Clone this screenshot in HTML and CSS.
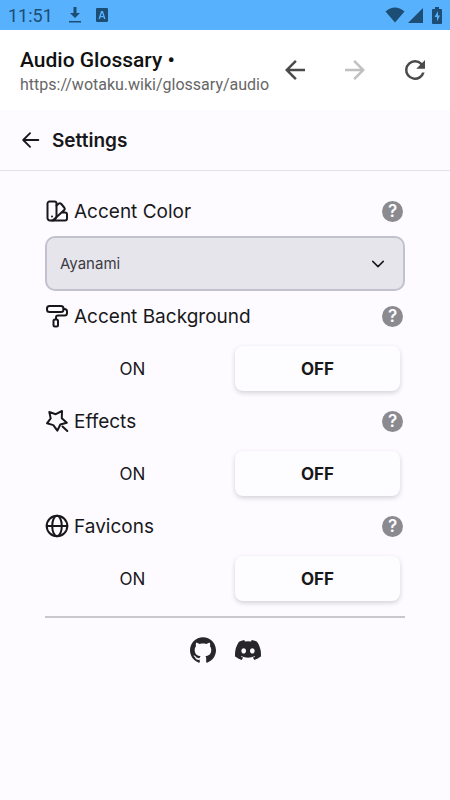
FILE: index.html
```html
<!DOCTYPE html>
<html lang="en">
<head>
<meta charset="utf-8">
<meta name="viewport" content="width=device-width, initial-scale=1">
<title>Settings</title>
<link rel="stylesheet" href="styles.css">
</head>
<body>
<div class="status">
  <span class="clock">11:51</span>
  <svg class="status-download" width="14" height="18" viewBox="0 0 14 18"><path d="M5.500 1h3v6H12l-5 5-5-5h3.500zM1 15h12v1.500H1z"/></svg>
  <svg class="status-app" width="12" height="14" viewBox="0 0 12 14"><path fill-rule="evenodd" d="M1 0h10a1 1 0 0 1 1 1v12a1 1 0 0 1-1 1H1a1 1 0 0 1-1-1V1a1 1 0 0 1 1-1zm4 3L2.500 11H4l.5-1.800h3L8 11h1.500L7 3zm1 1.700L7.100 8H4.900z"/></svg>
  <svg class="status-wifi" width="20" height="16" viewBox="0 0 20 16"><path d="M.5 4.500Q10-3.500 19.500 4.500L10 15.500z"/></svg>
  <svg class="status-signal" width="15" height="15" viewBox="0 0 15 15"><path d="M15 0v15H0z"/></svg>
  <svg class="status-battery" width="10" height="17" viewBox="0 0 10 17"><path fill-rule="evenodd" d="M3 0h4v2h2a1 1 0 0 1 1 1v13a1 1 0 0 1-1 1H1a1 1 0 0 1-1-1V3a1 1 0 0 1 1-1h2zm3 4L2.500 10H5v4.500L8 8.500H6z"/></svg>
</div>

<header class="browser">
  <div class="page-info">
    <div class="page-title">Audio Glossary •</div>
    <div class="page-url">https://wotaku.wiki/glossary/audio</div>
  </div>
  <nav class="browser-nav" aria-label="Browser">
    <button type="button" aria-label="Back"><svg width="30" height="30" viewBox="0 0 24 24"><path d="M20 11H7.830l5.590-5.590L12 4l-8 8 8 8 1.410-1.410L7.830 13H20z"/></svg></button>
    <button type="button" aria-label="Forward" disabled><svg width="30" height="30" viewBox="0 0 24 24"><path d="M12 4l-1.410 1.410L16.170 11H4v2h12.170l-5.580 5.590L12 20l8-8z"/></svg></button>
    <button type="button" aria-label="Reload"><svg width="30" height="30" viewBox="0 0 24 24"><path d="M17.650 6.350A7.960 7.960 0 0 0 12 4a8 8 0 1 0 7.730 10h-2.080A6 6 0 1 1 12 6c1.660 0 3.140.69 4.220 1.780L13 11h7V4z"/></svg></button>
  </nav>
</header>

<main>
  <div class="sheet-head">
    <button type="button" aria-label="Close settings"><svg class="line" width="22" height="22" viewBox="0 0 24 24"><path d="M20 12H4M11 4.500L3.500 12l7.500 7.500"/></svg></button>
    <h1>Settings</h1>
  </div>

  <form class="settings">
    <div class="row">
      <svg class="line" width="24" height="24" viewBox="0 0 24 24"><path d="M4.500 2.500h5a2 2 0 0 1 2 2V17a4.500 4.500 0 0 1-4.500 4.500h-2a2.500 2.500 0 0 1-2.500-2.500V4.500a2 2 0 0 1 2-2z"/><path d="M11.500 6.500l2-1.700a2 2 0 0 1 2.800.2l2.900 3.500a2 2 0 0 1-.2 2.700L8 21.300M16.500 13.500H20a2 2 0 0 1 2 2v4a2 2 0 0 1-2 2H7"/><path d="M7 17.400v.1"/></svg>
      <label for="accent">Accent Color</label>
      <button class="help" type="button" aria-label="About accent color">?</button>
    </div>
    <div class="select">
      <select id="accent"><option>Ayanami</option></select>
      <svg class="line" width="18" height="18" viewBox="0 0 24 24"><path d="M5 8.500l7 7 7-7"/></svg>
    </div>

    <div class="row">
      <svg class="line" width="24" height="24" viewBox="0 0 24 24"><rect x="2" y="2" width="16.500" height="6" rx="2.500"/><path d="M18.500 5h1a2.500 2.500 0 0 1 2.500 2.500V9a2.500 2.500 0 0 1-2.500 2.500H13a2 2 0 0 0-2 2V15"/><rect x="8.500" y="15.500" width="4.500" height="7" rx="1.500"/></svg>
      <span id="bg-label">Accent Background</span>
      <button class="help" type="button" aria-label="About accent background">?</button>
    </div>
    <div class="toggle" role="radiogroup" aria-labelledby="bg-label">
      <label><input type="radio" name="bg"><span>ON</span></label>
      <label><input type="radio" name="bg" checked><span>OFF</span></label>
    </div>

    <div class="row">
      <svg class="line" width="24" height="24" viewBox="0 0 24 24"><path d="M4.300 3l6.500 2.200L17 2l-.2 7.200 5 4.600-6.500 1.700-2.900 6.200-4.100-5.600L2 14.300l3.700-4.900zM17.500 17.500l4.800 4.500"/></svg>
      <span id="fx-label">Effects</span>
      <button class="help" type="button" aria-label="About effects">?</button>
    </div>
    <div class="toggle" role="radiogroup" aria-labelledby="fx-label">
      <label><input type="radio" name="fx"><span>ON</span></label>
      <label><input type="radio" name="fx" checked><span>OFF</span></label>
    </div>

    <div class="row">
      <svg class="line" width="24" height="24" viewBox="0 0 24 24"><circle cx="12" cy="12" r="10.300"/><ellipse cx="12" cy="12" rx="4.800" ry="10.300"/><path d="M1.700 12h20.600"/></svg>
      <span id="fav-label">Favicons</span>
      <button class="help" type="button" aria-label="About favicons">?</button>
    </div>
    <div class="toggle" role="radiogroup" aria-labelledby="fav-label">
      <label><input type="radio" name="fav"><span>ON</span></label>
      <label><input type="radio" name="fav" checked><span>OFF</span></label>
    </div>
  </form>

  <footer>
    <a href="#github" aria-label="GitHub"><svg width="26" height="26" viewBox="0 0 24 24"><path d="M12 .297c-6.630 0-12 5.373-12 12 0 5.303 3.438 9.800 8.205 11.385.6.113.82-.258.82-.577 0-.285-.01-1.040-.015-2.040-3.338.724-4.042-1.610-4.042-1.610C4.422 18.070 3.633 17.700 3.633 17.700c-1.087-.744.084-.729.084-.729 1.205.084 1.838 1.236 1.838 1.236 1.070 1.835 2.809 1.305 3.495.998.108-.776.417-1.305.76-1.605-2.665-.3-5.466-1.332-5.466-5.930 0-1.310.465-2.380 1.235-3.220-.135-.303-.54-1.523.105-3.176 0 0 1.005-.322 3.300 1.230.96-.267 1.980-.399 3-.405 1.020.006 2.040.138 3 .405 2.280-1.552 3.285-1.230 3.285-1.230.645 1.653.24 2.873.12 3.176.765.840 1.230 1.910 1.230 3.220 0 4.610-2.805 5.625-5.475 5.920.42.360.810 1.096.810 2.220 0 1.606-.015 2.896-.015 3.286 0 .315.210.690.825.570C20.565 22.092 24 17.592 24 12.297c0-6.627-5.373-12-12-12"/></svg></a>
    <a href="#discord" aria-label="Discord"><svg width="26" height="26" viewBox="0 0 24 24"><path d="M20.317 4.370a19.791 19.791 0 0 0-4.885-1.515.074.074 0 0 0-.079.037c-.211.375-.445.865-.608 1.250a18.270 18.270 0 0 0-5.487 0 12.640 12.640 0 0 0-.618-1.250.077.077 0 0 0-.079-.037A19.736 19.736 0 0 0 3.677 4.370a.070.070 0 0 0-.032.028C.533 9.046-.319 13.580.099 18.058a.082.082 0 0 0 .031.056 19.900 19.900 0 0 0 5.993 3.030.078.078 0 0 0 .084-.028c.462-.630.873-1.295 1.226-1.994a.076.076 0 0 0-.042-.106 13.107 13.107 0 0 1-1.872-.892.077.077 0 0 1-.008-.128c.126-.094.252-.192.372-.291a.074.074 0 0 1 .078-.011c3.927 1.793 8.180 1.793 12.061 0a.074.074 0 0 1 .079.010c.120.099.246.198.373.292a.077.077 0 0 1-.007.128 12.300 12.300 0 0 1-1.873.891.077.077 0 0 0-.041.107c.360.698.772 1.363 1.225 1.993a.076.076 0 0 0 .084.029 19.839 19.839 0 0 0 6.002-3.030.077.077 0 0 0 .031-.055c.500-5.177-.838-9.674-3.548-13.660a.061.061 0 0 0-.031-.029zM8.020 15.331c-1.183 0-2.157-1.086-2.157-2.419s.955-2.419 2.157-2.419c1.211 0 2.176 1.095 2.157 2.419 0 1.333-.956 2.419-2.157 2.419zm7.975 0c-1.183 0-2.157-1.086-2.157-2.419s.955-2.419 2.157-2.419c1.211 0 2.176 1.095 2.157 2.419 0 1.333-.946 2.419-2.157 2.419z"/></svg></a>
  </footer>
</main>
</body>
</html>
```

FILE: styles.css
```css
* {
  box-sizing: border-box;
}

body {
  margin: 0;
  min-height: 100vh;
  background: #fdfbff;
  color: #18181b;
  font-family: Inter, "Liberation Sans", sans-serif;
}

button {
  display: flex;
  align-items: center;
  justify-content: center;
  padding: 0;
  border: 0;
  background: none;
  color: inherit;
  font: inherit;
}

svg {
  display: block;
  flex: none;
  fill: currentColor;
}

.line {
  fill: none;
  stroke: currentColor;
  stroke-width: 2;
  stroke-linecap: round;
  stroke-linejoin: round;
}

.status {
  display: flex;
  align-items: center;
  height: 30px;
  padding: 0 8px;
  background: #57b1fd;
  color: #1c4d75;
  font: 18px Roboto, sans-serif;
}

.status-download {
  margin-left: 15px;
}

.status-app {
  margin-left: 14px;
}

.status-wifi {
  margin-left: auto;
}

.status-signal {
  margin-left: 3px;
}

.status-battery {
  margin-left: 9px;
}

.browser {
  display: flex;
  align-items: center;
  height: 80px;
  padding: 0 20px;
  background: #fff;
  font-family: Roboto, sans-serif;
}

.page-info {
  flex: 1;
  min-width: 0;
  padding-top: 4px;
  white-space: nowrap;
}

.page-title {
  color: #111;
  font-size: 21px;
  font-weight: 500;
  line-height: 26px;
}

.page-url {
  color: #666;
  font-size: 16px;
  line-height: 24px;
}

.browser-nav {
  display: flex;
  gap: 30px;
  color: #4a4a4a;
}

.browser-nav button:disabled {
  color: #c0c0c0;
}

.sheet-head {
  display: flex;
  align-items: center;
  gap: 10px;
  height: 61px;
  padding: 0 20px;
  border-bottom: 1px solid #e4e2e8;
}

h1 {
  margin: 0;
  font-size: 19px;
  font-weight: 600;
}

.settings {
  display: grid;
  gap: 10px;
  margin: 0 45px;
  padding: 25px 0 10px;
  border-bottom: 2px solid #c8c7cc;
}

.row {
  display: flex;
  align-items: center;
  gap: 5px;
  height: 30px;
  font-size: 19px;
}

.help {
  width: 21px;
  height: 21px;
  margin: 0 2px 0 auto;
  border-radius: 50%;
  background: #8b8a8e;
  color: #fdfbff;
  font-size: 17px;
  font-weight: 600;
}

.select {
  display: grid;
  align-items: center;
}

.select > * {
  grid-area: 1 / 1;
}

.select select {
  width: 100%;
  height: 55px;
  padding: 0 13px;
  border: 2px solid #c2c2ce;
  border-radius: 10px;
  appearance: none;
  background: #e7e5ec;
  color: #3c3c43;
  font: 15px Inter, sans-serif;
}

.select svg {
  justify-self: end;
  margin-right: 18px;
  pointer-events: none;
}

.toggle {
  display: grid;
  grid-template-columns: 1fr 1fr;
  gap: 20px;
  padding: 5px;
}

.toggle label {
  display: grid;
  height: 45px;
}

.toggle input,
.toggle span {
  grid-area: 1 / 1;
}

.toggle input {
  margin: 0;
  appearance: none;
}

.toggle span {
  display: grid;
  place-items: center;
  border-radius: 8px;
  font-size: 17px;
}

.toggle input:checked + span {
  box-shadow: 0 2px 5px #0000002b;
  background: #fdfcff;
  font-weight: 700;
}

footer {
  display: flex;
  justify-content: center;
  gap: 19px;
  padding: 19px;
}

footer a {
  color: #26262b;
}
```
